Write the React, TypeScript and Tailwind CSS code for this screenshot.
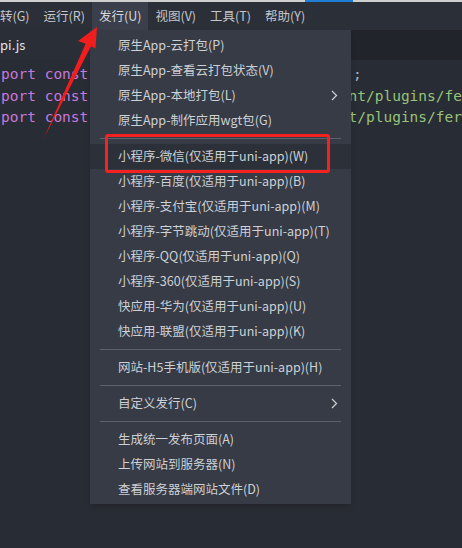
import React from 'react'

const topMenus = [
  { label: '转(G)', active: false },
  { label: '运行(R)', active: false },
  { label: '发行(U)', active: true },
  { label: '视图(V)', active: false },
  { label: '工具(T)', active: false },
  { label: '帮助(Y)', active: false },
]

type Entry = { label: string; sub?: boolean; hot?: boolean } | 'sep'

const entries: Entry[] = [
  { label: '原生App-云打包(P)' },
  { label: '原生App-查看云打包状态(V)' },
  { label: '原生App-本地打包(L)', sub: true },
  { label: '原生App-制作应用wgt包(G)' },
  'sep',
  { label: '小程序-微信(仅适用于uni-app)(W)', hot: true },
  { label: '小程序-百度(仅适用于uni-app)(B)' },
  { label: '小程序-支付宝(仅适用于uni-app)(M)' },
  { label: '小程序-字节跳动(仅适用于uni-app)(T)' },
  { label: '小程序-QQ(仅适用于uni-app)(Q)' },
  { label: '小程序-360(仅适用于uni-app)(S)' },
  { label: '快应用-华为(仅适用于uni-app)(U)' },
  { label: '快应用-联盟(仅适用于uni-app)(K)' },
  'sep',
  { label: '网站-H5手机版(仅适用于uni-app)(H)' },
  'sep',
  { label: '自定义发行(C)', sub: true },
  'sep',
  { label: '生成统一发布页面(A)' },
  { label: '上传网站到服务器(N)' },
  { label: '查看服务器端网站文件(D)' },
]

const codeLines = [
  { left: 'port const', right: ';', rightColor: 'text-[#abb2bf]' },
  { left: 'port const', right: 'nt/plugins/fe', rightColor: 'text-[#98c379]' },
  { left: 'port const', right: 't/plugins/fer', rightColor: 'text-[#98c379]' },
]

const Chevron = () => (
  <svg width="7" height="11" viewBox="0 0 7 11" className="mr-[13px]">
    <path d="M1 1 L5.5 5.5 L1 10" fill="none" stroke="#c9ccd1" strokeWidth="1.3" />
  </svg>
)

const App: React.FC = () => {
  const ui = { fontFamily: '"Noto Sans CJK SC", "Noto Sans", sans-serif' }
  const mono = { fontFamily: '"DejaVu Sans Mono", "Liberation Mono", monospace' }

  return (
    <div className="relative w-[462px] h-[548px] overflow-hidden bg-[#282c34]" style={ui}>
      {/* window top edge */}
      <div className="flex h-[2px] bg-[#cfcfcf]">
        <div className="w-[305px]" />
        <div className="w-[48px] bg-[#1f7fd6]" />
      </div>

      {/* menu bar */}
      <div className="flex h-[28px] bg-[#2b2f38] ml-[-7px]">
        {topMenus.map((m) => (
          <div
            key={m.label}
            className={`flex items-center px-[7px] text-[12.5px] leading-none ${
              m.active ? 'bg-[#3a3f4b] text-[#d6d8dc]' : 'text-[#c3c6cc]'
            }`}
          >
            {m.label}
          </div>
        ))}
      </div>

      {/* tab bar */}
      <div className="flex h-[30px] bg-[#21252b]">
        <div className="flex items-center w-[90px] bg-[#2a2e36] text-[13px] text-[#e3e5e8] leading-none pb-[2px]">
          pi.js
        </div>
      </div>

      {/* code */}
      <div className="pt-[4px] pl-[1px] text-[14.5px] leading-[21.7px]" style={mono}>
        {codeLines.map((l, i) => (
          <div key={i} className="flex whitespace-pre">
            <span className="w-[352px] text-[#c678dd]">{l.left}</span>
            <span className={l.rightColor}>{l.right}</span>
          </div>
        ))}
      </div>

      {/* dropdown */}
      <div className="absolute left-[90px] top-[30px] w-[261px] bg-[#363b45] pt-[3px] pb-[2px] shadow-md">
        {entries.map((e, i) =>
          e === 'sep' ? (
            <div key={i} className="py-[5px] px-[10px]">
              <div className="h-px bg-[#5d616a]" />
            </div>
          ) : (
            <div
              key={i}
              className={`relative flex items-center justify-between h-[25px] pl-[28px] text-[12.5px] leading-none ${
                e.hot ? 'bg-[#2c3039]' : ''
              } text-[#cdd0d5]`}
            >
              <span>{e.label}</span>
              {e.sub && <Chevron />}
              {e.hot && (
                <div className="absolute left-[15px] top-[-10px] w-[225px] h-[39px] border-[3px] border-[#f52222] rounded-[3px]" />
              )}
            </div>
          )
        )}
      </div>

      {/* red arrow */}
      <svg className="absolute left-0 top-0" width="462" height="548" viewBox="0 0 462 548">
        <polygon
          points="97,27 95.5,48.5 91,46.3 44,138 85.6,43.7 78,41"
          fill="#f21d1d"
        />
      </svg>
    </div>
  )
}

export default App
